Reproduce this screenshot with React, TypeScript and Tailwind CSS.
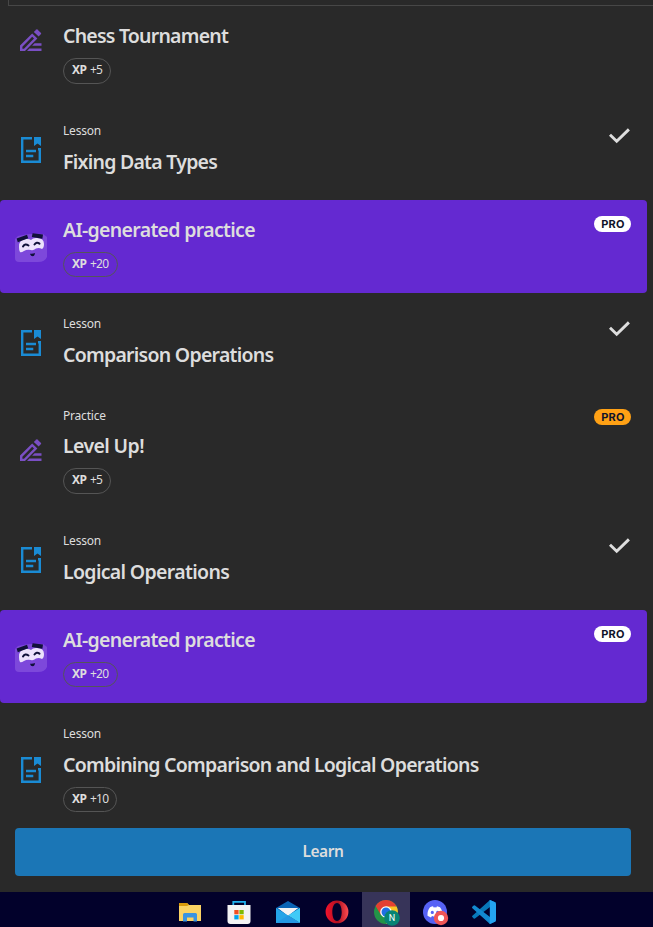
import type { ReactNode } from 'react';

const FONT = "font-['Noto_Sans','Open_Sans',sans-serif]";

function LessonIcon() {
  return (
    <svg width="20" height="26" viewBox="0 0 20 26" fill="none">
      <path d="M11 1.2H1.2V24.8H18.8V12.2H17" stroke="#1a8bd4" strokeWidth="2.4" />
      <path d="M13 0H20V9L16.5 6.6L13 9Z" fill="#1a8bd4" />
      <path d="M5 14H15M5 19H12.3" stroke="#1a8bd4" strokeWidth="2.3" />
    </svg>
  );
}

function PencilIcon() {
  return (
    <svg width="22" height="22" viewBox="0 0 22 22" fill="#7a4fc4">
      <path
        fillRule="evenodd"
        d="M0 22V16.6L12.2 4.4L17.4 9.4L5 22ZM2.4 17.7V19.8H4L14 9.5L12.2 7.8Z"
      />
      <path d="M13.8 2.9L16.4 0.4Q16.9 0 17.4 0.4L21 4Q21.4 4.5 21 5L18.7 7.6Z" />
      <path d="M14.6 14.3H21.5V16.8H12.1ZM9.4 19.5H21.5V22H7Z" />
    </svg>
  );
}

function FaceIcon() {
  return (
    <svg width="32" height="30" viewBox="0 0 32 30">
      <path d="M3 3Q15 0 28 1L32 4V24Q30 29 23 29H4Q0 29 0 25V6Z" fill="#7d48db" />
      <path
        d="M4 14Q4 6 11 6Q14 5.5 16 7Q18 4.6 22 5Q29 5 29 11Q29 15 27 16Q24 14.5 21 15.5Q18 18 16 17Q12 16 9 18Q6 20 5 19Q4 18 4 14Z"
        fill="#ece2fc"
      />
      <path d="M1.6 5.4L12 1.8L13.2 5.2L2.8 9.2ZM17.6 0.2L28 1.6L27.4 5.8L16.8 4Z" fill="#10113a" />
      <path
        d="M8 13.5Q10 10 13.5 12.5M19.5 11.5Q21.5 8.5 24.5 10.6"
        stroke="#10113a"
        strokeWidth="2"
        fill="none"
        strokeLinecap="round"
      />
      <path d="M15 20.7Q18 21 20 20Q19.6 23.2 17.8 23.2Q15.5 23.2 15 20.7Z" fill="#10113a" />
    </svg>
  );
}

function CheckIcon() {
  return (
    <svg width="22" height="16" viewBox="0 0 22 16" fill="none">
      <path d="M2 6.8L8.7 13.2L20.9 1.4" stroke="#dedede" strokeWidth="2.9" />
    </svg>
  );
}

function XpBadge({ amount, className }: { amount: string; className: string }) {
  return (
    <div className={`flex items-center rounded-full border pb-0.5 pl-2 text-[12px] leading-4 ${className}`}>
      <span className="w-[18px] font-bold tracking-[-0.5px]">XP</span>
      <span className="tracking-[-0.8px]">{amount}</span>
    </div>
  );
}

function Pro({ className }: { className: string }) {
  return (
    <div
      className={`flex h-4 w-[37px] items-center justify-center rounded-full pl-px font-['Inter',sans-serif] text-[11px] font-bold leading-4 tracking-[0.2px] text-[#10142b] ${className}`}
    >
      PRO
    </div>
  );
}

type RowProps = {
  row: string;
  icon: ReactNode;
  iconTop: string;
  label?: string;
  title: string;
  titleClass: string;
  badge?: ReactNode;
  right?: ReactNode;
};

function Row({ row, icon, iconTop, label, title, titleClass, badge, right }: RowProps) {
  return (
    <div className={`flex w-[647px] shrink-0 ${row}`}>
      <div className={`flex w-[63px] shrink-0 items-start ${iconTop}`}>{icon}</div>
      <div className="flex min-w-0 grow flex-col items-start">
        {label && <div className="mt-[23px] text-[12px] leading-4 tracking-[-0.2px]">{label}</div>}
        <div className={`whitespace-nowrap text-[19.5px] font-semibold leading-[30px] ${titleClass}`}>{title}</div>
        {badge}
      </div>
      <div className="flex shrink-0 items-start pr-4">{right}</div>
    </div>
  );
}

function Taskbar() {
  const cell = 'flex h-full w-12 items-start justify-center pt-2';
  return (
    <div className="flex h-[35px] shrink-0 gap-px bg-[#02012b] pl-[166px]">
      <div className={cell}>
        <svg width="24" height="24" viewBox="0 0 24 24">
          <path d="M1 3H9L11 5H23V21H1Z" fill="#fbd364" />
          <path d="M1 3H9L11 5L9 6H1Z" fill="#d99a0b" />
          <path d="M5 21.5V14.5Q5 13 6.5 13H17.5Q19 13 19 14.5V21.5H15.5V17.5H9V21.5Z" fill="#3a94e2" />
        </svg>
      </div>
      <div className={cell}>
        <svg width="24" height="24" viewBox="0 0 24 24">
          <path d="M6.3 6V1.8H18V6" stroke="#20b2ee" strokeWidth="1.8" fill="none" />
          <path d="M0.5 5H23.5V21Q23.5 24 20.5 24H3.5Q0.5 24 0.5 21Z" fill="#f3f3f4" />
          <path d="M7.3 10H11.6V14.3H7.3Z" fill="#f25022" />
          <path d="M12.4 10H16.7V14.3H12.4Z" fill="#7fba00" />
          <path d="M7.3 15.1H11.6V19.4H7.3Z" fill="#00a4ef" />
          <path d="M12.4 15.1H16.7V19.4H12.4Z" fill="#ffb900" />
        </svg>
      </div>
      <div className={cell}>
        <svg width="24" height="24" viewBox="0 0 24 24">
          <path d="M0 8L12 1L24 8V15H0Z" fill="#0b64b4" />
          <path d="M2 8H22L12 16Z" fill="#f3f3f4" />
          <path d="M0 8L24 23H0Z" fill="#24a4e8" />
          <path d="M2 8H22L12 14.8Z" fill="#f3f3f4" />
          <path d="M24 8L12 15.4L24 23Z" fill="#40caf7" />
          <path d="M0 23L12 15.4L24 23Z" fill="#2298e4" />
        </svg>
      </div>
      <div className={cell}>
        <svg width="24" height="24" viewBox="0 0 24 24">
          <defs>
            <linearGradient id="opera" x1="0" x2="1" y1="0" y2="0">
              <stop offset="0" stopColor="#f3132c" />
              <stop offset="0.55" stopColor="#ae1020" />
              <stop offset="1" stopColor="#ff4d52" />
            </linearGradient>
          </defs>
          <path
            fillRule="evenodd"
            fill="url(#opera)"
            d="M12 .5A11.4 11.4 0 0 1 12 23.3A11.4 11.4 0 0 1 12 .5ZM12 3C9 3 7.3 7 7.3 12S9 21 12 21S16.7 17 16.7 12S15 3 12 3Z"
          />
        </svg>
      </div>
      <div className={`${cell} bg-[#373459]`}>
        <svg width="26" height="26" viewBox="0 0 26 26" className="ml-0.5">
          <circle cx="12" cy="12" r="12" fill="#239447" />
          <path d="M12 12L1.6 6A12 12 0 0 1 22.4 6Z" fill="#e44032" />
          <path d="M1.6 6L7 15L12 6H4Z" fill="#e44032" />
          <path d="M12 6.5H22.6A12 12 0 0 1 12 24L17 14.5Z" fill="#fbc324" />
          <circle cx="12" cy="12" r="5.8" fill="#fff" />
          <circle cx="12" cy="12" r="4.5" fill="#1f70e2" />
          <circle cx="18" cy="18" r="7.8" fill="#078474" />
          <text x="18" y="21.3" textAnchor="middle" fontSize="9" fill="#fff" fontFamily="Roboto, sans-serif">
            N
          </text>
        </svg>
      </div>
      <div className={cell}>
        <svg width="26" height="26" viewBox="0 0 26 26" className="ml-0.5">
          <circle cx="12" cy="12" r="12" fill="#5662f5" />
          <path
            fillRule="evenodd"
            d="M8.8 6.6L10 6.3L10.7 7.5Q12 7.2 13.3 7.5L14 6.3L17 7.2Q20 11 19.5 15.7L16 17.5L15 16Q12 17 9 16L8 17.5L4.5 15.7Q4 11 7 7.2ZM9.3 10.7A1.6 1.7 0 1 0 9.3 14.1A1.6 1.7 0 1 0 9.3 10.7ZM14.7 10.7A1.6 1.7 0 1 0 14.7 14.1A1.6 1.7 0 1 0 14.7 10.7Z"
            fill="#fff"
          />
          <circle cx="18" cy="18" r="7.2" fill="#f05657" />
          <circle cx="18" cy="18" r="3.1" fill="#fff" />
        </svg>
      </div>
      <div className={cell}>
        <svg width="24" height="24" viewBox="0 0 24 24">
          <path d="M18 0L24 2.5L18 7L3 18.5Q2.3 18.8 1.7 18.4L0.3 17Q-.2 16.3.4 15.7Z" fill="#0878ba" />
          <path d="M.4 8.2Q-.2 7.5.3 6.8L1.7 5.5Q2.3 5.1 3 5.5L18 17L24 21L18 24Z" fill="#1289d0" />
          <path d="M18 0L23 2.2Q24 2.7 24 4V20Q24 21.3 23 21.8L18 24Q17.2 23.7 17.8 22.5V1.5Q17.2.3 18 0Z" fill="#24a5f2" />
        </svg>
      </div>
    </div>
  );
}

export default function App() {
  const ai = 'h-[93px] rounded bg-[#6429d1] pl-[15px]';
  const badge = 'border-[#555555]';
  const aiBadge = 'border-[#55555a] mt-[7px] h-[25px] w-[55px]';
  const lessonIcon = 'pt-[37px] pl-[21px]';
  return (
    <div className={`flex h-[927px] w-[653px] flex-col overflow-hidden bg-[#292929] text-[#dddddd] ${FONT}`}>
      <div className="ml-2 h-1.5 shrink-0 border-b border-l border-[#474747]" />
      <Row
        row="h-[94px]"
        icon={<PencilIcon />}
        iconTop="pt-[23px] pl-5"
        title="Chess Tournament"
        titleClass="mt-[15px] tracking-[-0.78px]"
        badge={<XpBadge amount="+5" className={`mt-[7px] h-[26px] w-12 ${badge}`} />}
      />
      <Row
        row="h-[100px]"
        icon={<LessonIcon />}
        iconTop={lessonIcon}
        label="Lesson"
        title="Fixing Data Types"
        titleClass="mt-2 tracking-[-0.75px]"
        right={<div className="mt-7 mr-px"><CheckIcon /></div>}
      />
      <Row
        row={ai}
        icon={<FaceIcon />}
        iconTop="-mr-[15px] pt-[33px]"
        title="AI-generated practice"
        titleClass="mt-[15px] tracking-[-0.68px]"
        badge={<XpBadge amount="+20" className={aiBadge} />}
        right={<Pro className="mt-4 bg-white" />}
      />
      <Row
        row="h-[92px]"
        icon={<LessonIcon />}
        iconTop={lessonIcon}
        label="Lesson"
        title="Comparison Operations"
        titleClass="mt-2 tracking-[-0.74px]"
        right={<div className="mt-7 mr-px"><CheckIcon /></div>}
      />
      <Row
        row="h-[125px]"
        icon={<PencilIcon />}
        iconTop="pt-[54px] pl-5"
        label="Practice"
        title="Level Up!"
        titleClass="mt-[7px] tracking-[-0.62px]"
        badge={<XpBadge amount="+5" className={`mt-[7px] h-[26px] w-12 ${badge}`} />}
        right={<Pro className="mt-6 bg-[#ffa115]" />}
      />
      <Row
        row="h-[100px]"
        icon={<LessonIcon />}
        iconTop={lessonIcon}
        label="Lesson"
        title="Logical Operations"
        titleClass="mt-2 tracking-[-0.67px]"
        right={<div className="mt-7 mr-px"><CheckIcon /></div>}
      />
      <Row
        row={ai}
        icon={<FaceIcon />}
        iconTop="-mr-[15px] pt-[33px]"
        title="AI-generated practice"
        titleClass="mt-[15px] tracking-[-0.68px]"
        badge={<XpBadge amount="+20" className={aiBadge} />}
        right={<Pro className="mt-4 bg-white" />}
      />
      <Row
        row="h-[125px]"
        icon={<LessonIcon />}
        iconTop="pt-[54px] pl-[21px]"
        label="Lesson"
        title="Combining Comparison and Logical Operations"
        titleClass="mt-2 tracking-[-0.75px]"
        badge={<XpBadge amount="+10" className={`mt-[7px] h-[25px] w-[54px] ${badge}`} />}
      />
      <button className="ml-[15px] h-12 w-[616px] shrink-0 rounded bg-[#1b76b6] pb-0.5 text-[15.5px] font-semibold leading-6 tracking-[-0.4px]">
        Learn
      </button>
      <div className="grow" />
      <Taskbar />
    </div>
  );
}
